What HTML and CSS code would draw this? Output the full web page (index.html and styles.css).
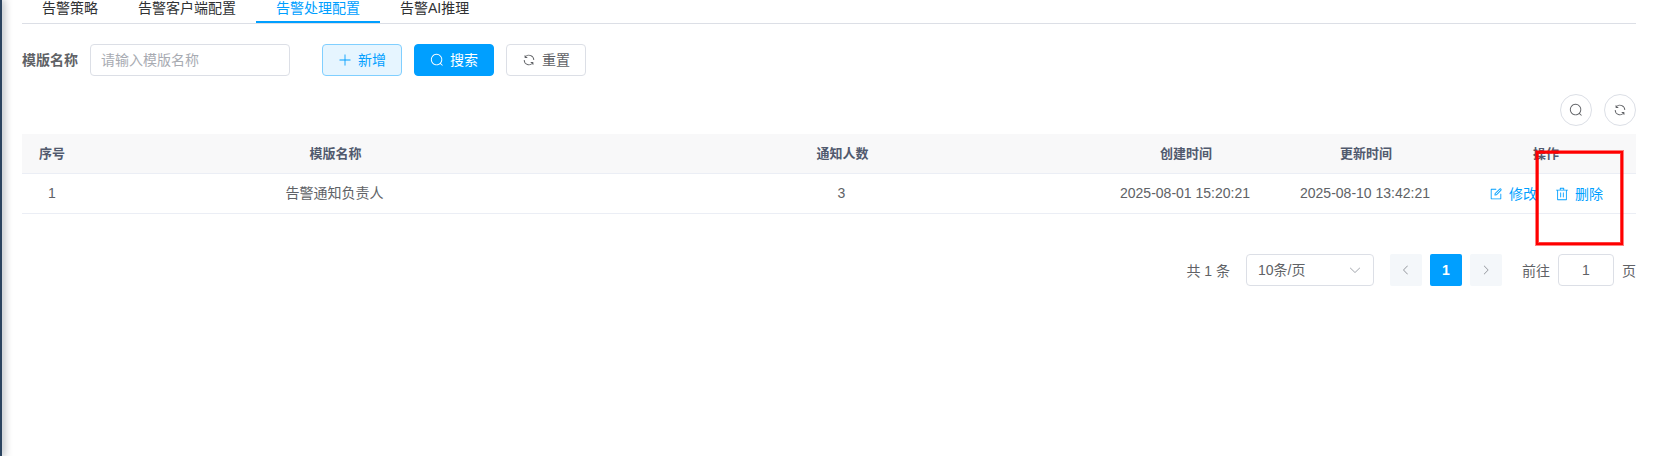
FILE: index.html
```html
<!DOCTYPE html>
<html lang="zh-CN">
<head>
<meta charset="utf-8">
<title>告警处理配置</title>
<link rel="stylesheet" href="styles.css">
</head>
<body>
<svg class="sprite" width="0" height="0">
  <symbol id="plus" viewBox="0 0 1024 1024"><path d="M480 480V128a32 32 0 0 1 64 0v352h352a32 32 0 1 1 0 64H544v352a32 32 0 1 1-64 0V544H128a32 32 0 0 1 0-64h352z"/></symbol>
  <symbol id="search" viewBox="0 0 1024 1024"><path d="m795.904 750.72 124.992 124.928a32 32 0 0 1-45.248 45.248L750.656 795.904a416 416 0 1 1 45.248-45.248zM480 832a352 352 0 1 0 0-704 352 352 0 0 0 0 704z"/></symbol>
  <symbol id="refresh" viewBox="0 0 1024 1024"><path d="M771.776 794.88A384 384 0 0 1 128 512h64a320 320 0 0 0 555.712 216.448H654.72a32 32 0 1 1 0-64h149.056a32 32 0 0 1 32 32v148.928a32 32 0 1 1-64 0v-50.56zM276.288 295.616h92.992a32 32 0 0 1 0 64H220.16a32 32 0 0 1-32-32V178.56a32 32 0 0 1 64 0v50.56A384 384 0 0 1 896.128 512h-64a320 320 0 0 0-555.776-216.384z"/></symbol>
  <symbol id="edit" viewBox="0 0 1024 1024"><path d="M832 512a32 32 0 1 1 64 0v352a32 32 0 0 1-32 32H160a32 32 0 0 1-32-32V160a32 32 0 0 1 32-32h352a32 32 0 0 1 0 64H192v640h640V512z"/><path d="m469.952 554.24 52.8-7.552L847.104 222.4a32 32 0 1 0-45.248-45.248L477.44 501.44l-7.552 52.8zm422.4-422.4a96 96 0 0 1 0 135.808l-331.84 331.84a32 32 0 0 1-18.112 9.088L436.8 623.68a32 32 0 0 1-36.224-36.224l15.104-105.6a32 32 0 0 1 9.024-18.112l331.904-331.84a96 96 0 0 1 135.744 0z"/></symbol>
  <symbol id="delete" viewBox="0 0 1024 1024"><path d="M160 256H96a32 32 0 0 1 0-64h256V95.936a32 32 0 0 1 32-32h256a32 32 0 0 1 32 32V192h256a32 32 0 1 1 0 64h-64v672a32 32 0 0 1-32 32H192a32 32 0 0 1-32-32V256zm448-64v-64H416v64h192zM224 896h576V256H224v640zm192-128a32 32 0 0 1-32-32V416a32 32 0 0 1 64 0v320a32 32 0 0 1-32 32zm192 0a32 32 0 0 1-32-32V416a32 32 0 0 1 64 0v320a32 32 0 0 1-32 32z"/></symbol>
  <symbol id="down" viewBox="0 0 1024 1024"><path d="M831.872 340.864 512 652.672 192.128 340.864a30.592 30.592 0 0 0-42.752 0 29.12 29.12 0 0 0 0 41.6L489.664 714.24a32 32 0 0 0 44.672 0l340.288-331.712a29.12 29.12 0 0 0 0-41.728 30.592 30.592 0 0 0-42.752 0z"/></symbol>
  <symbol id="left" viewBox="0 0 1024 1024"><path d="M609.408 149.376 277.76 489.6a32 32 0 0 0 0 44.672l331.648 340.352a29.12 29.12 0 0 0 41.728 0 30.592 30.592 0 0 0 0-42.752L339.264 511.936l311.872-319.872a30.592 30.592 0 0 0 0-42.688 29.12 29.12 0 0 0-41.728 0z"/></symbol>
  <symbol id="right" viewBox="0 0 1024 1024"><path d="M340.864 149.312a30.592 30.592 0 0 0 0 42.752L652.736 512 340.864 831.872a30.592 30.592 0 0 0 0 42.752 29.12 29.12 0 0 0 41.728 0L714.24 534.336a32 32 0 0 0 0-44.672L382.592 149.376a29.12 29.12 0 0 0-41.728 0z"/></symbol>
</svg>
<div class="app">
  <aside class="sidebar-edge"></aside>
  <main class="content">
    <nav class="tabs">
      <a class="tab">告警策略</a>
      <a class="tab">告警客户端配置</a>
      <a class="tab active">告警处理配置</a>
      <a class="tab">告警AI推理</a>
    </nav>
    <form class="search-form">
      <label class="form-label" for="name">模版名称</label>
      <input class="input" id="name" type="text" placeholder="请输入模版名称">
      <div class="buttons">
        <button class="btn plain" type="button"><svg class="icon"><use href="#plus"/></svg><span>新增</span></button>
        <button class="btn primary" type="button"><svg class="icon"><use href="#search"/></svg><span>搜索</span></button>
        <button class="btn" type="button"><svg class="icon"><use href="#refresh"/></svg><span>重置</span></button>
      </div>
    </form>
    <div class="toolbar">
      <button class="btn circle"><svg class="icon"><use href="#search"/></svg></button>
      <button class="btn circle"><svg class="icon"><use href="#refresh"/></svg></button>
    </div>
    <div class="table">
      <div class="row head">
        <div>序号</div><div>模版名称</div><div>通知人数</div><div>创建时间</div><div>更新时间</div><div>操作</div>
      </div>
      <div class="row">
        <div class="cell index">1</div><div class="cell">告警通知负责人</div><div class="cell">3</div><div class="cell">2025-08-01 15:20:21</div><div class="cell">2025-08-10 13:42:21</div>
        <div class="actions">
          <a class="link"><svg class="icon"><use href="#edit"/></svg><span>修改</span></a>
          <a class="link"><svg class="icon"><use href="#delete"/></svg><span>删除</span></a>
        </div>
      </div>
    </div>
    <div class="pagination">
      <span class="total">共 1 条</span>
      <div class="select"><span>10条/页</span><svg class="icon"><use href="#down"/></svg></div>
      <div class="pager">
        <button class="page"><svg class="arrow"><use href="#left"/></svg></button>
        <button class="page current">1</button>
        <button class="page"><svg class="arrow"><use href="#right"/></svg></button>
      </div>
      <span class="goto">前往</span>
      <div class="jump">1</div>
      <span class="unit">页</span>
    </div>
  </main>
  <div class="highlight"></div>
</div>
</body>
</html>
```

FILE: styles.css
```css
* { box-sizing: border-box; }
body {
  margin: 0;
  background: #fff;
  color: #606266;
  font: 14px/20px "Liberation Sans", "Noto Sans CJK SC", sans-serif;
}
button, input { font: inherit; color: inherit; }
.sprite { position: absolute; }
.app { position: relative; display: flex; height: 456px; overflow: hidden; }
.sidebar-edge {
  flex: none;
  width: 2px;
  background: #2b4460;
  box-shadow: 0 0 8px 1px rgba(0, 21, 41, 0.5);
}
.content { flex: 1; padding: 0 20px; }
.icon { width: 14px; height: 14px; fill: currentColor; flex: none; }

.tabs { display: flex; height: 24px; border-bottom: 1px solid #dcdfe6; padding-left: 0; }
.tab { padding: 0 20px; height: 23px; line-height: 17px; color: #303133; }
.tab.active { color: #009fff; border-bottom: 2px solid #009fff; }

.search-form { display: flex; align-items: center; margin-top: 20px; height: 32px; }
.form-label { width: 68px; font-weight: 700; }
.input {
  width: 200px;
  height: 32px;
  padding: 0 10px;
  border: 1px solid #dcdfe6;
  border-radius: 4px;
  background: #fff;
}
.input::placeholder { color: #a8abb2; opacity: 1; }
.buttons { display: flex; gap: 12px; margin-left: 32px; }
.btn {
  display: flex;
  align-items: center;
  justify-content: center;
  gap: 6px;
  width: 80px;
  height: 32px;
  padding: 0;
  border: 1px solid #dcdfe6;
  border-radius: 4px;
  background: #fff;
}
.btn.plain { color: #009fff; background: #e6f5ff; border-color: #80cfff; }
.btn.primary { color: #fff; background: #009fff; border-color: #009fff; }
.btn.circle { width: 32px; border-radius: 50%; }

.toolbar { display: flex; justify-content: flex-end; gap: 12px; margin: 18px 0 8px; }

.row {
  display: grid;
  grid-template-columns: 60px 1fr 1fr 180px 180px 180px;
  align-items: center;
  height: 40px;
  text-align: center;
  border-bottom: 1px solid #ebeef5;
}
.row.head { background: #f8f8f9; color: #515a6e; font-size: 13px; font-weight: 700; }
.cell { padding: 0 2px 1px 0; }
.cell.index { padding-right: 0; }
.actions { display: flex; justify-content: center; gap: 18px; padding-top: 1px; }
.link { display: flex; align-items: center; gap: 6px; color: #009fff; }

.pagination { display: flex; justify-content: flex-end; align-items: center; margin-top: 40px; height: 32px; }
.total { margin-right: 16px; }
.total, .goto, .unit { padding-top: 1px; }
.select {
  display: flex;
  align-items: center;
  justify-content: space-between;
  width: 128px;
  height: 32px;
  padding: 0 11px;
  border: 1px solid #dcdfe6;
  border-radius: 4px;
  margin-right: 16px;
}
.select .icon { color: #a8abb2; }
.pager { display: flex; gap: 8px; margin-right: 20px; }
.page {
  display: flex;
  align-items: center;
  justify-content: center;
  width: 32px;
  height: 32px;
  padding: 0;
  border: 0;
  border-radius: 2px;
  color: #909399;
  background: #f4f7fa;
}
.page.current { color: #fff; background: #009fff; font-weight: 700; }
.arrow { width: 12px; height: 12px; fill: currentColor; }
.jump {
  width: 56px;
  height: 32px;
  line-height: 30px;
  margin: 0 8px;
  text-align: center;
  border: 1px solid #dcdfe6;
  border-radius: 4px;
}
.highlight {
  position: absolute;
  left: 1536px;
  top: 151px;
  width: 87px;
  height: 94px;
  border: 2px solid #f00;
  box-shadow: 0 0 0 1px rgba(255, 0, 0, 0.5), inset 0 0 0 1px rgba(255, 0, 0, 0.75);
}
```
